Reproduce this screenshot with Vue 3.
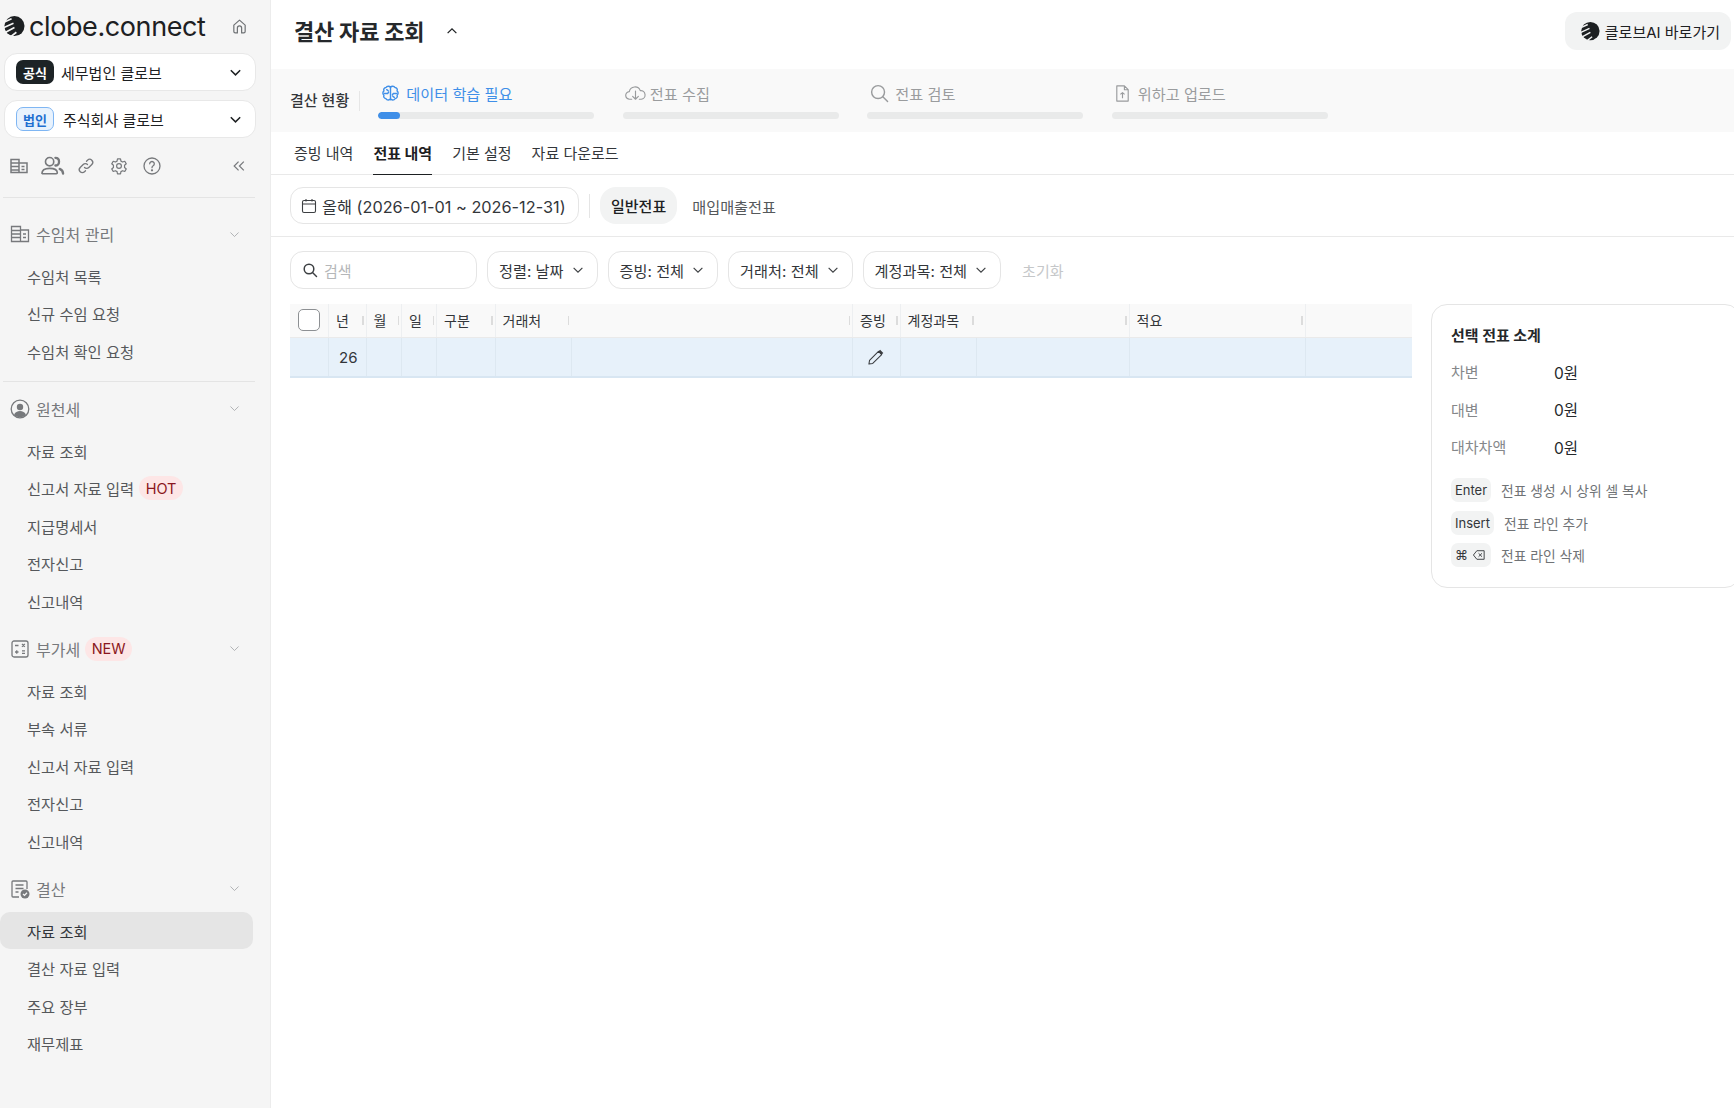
<script setup>
const sections = [
  { title: '수임처 관리', icon: 'building', items: ['수임처 목록', '신규 수임 요청', '수임처 확인 요청'], rule: true },
  { title: '원천세', icon: 'user', items: ['자료 조회', '신고서 자료 입력', '지급명세서', '전자신고', '신고내역'], hot: 1 },
  { title: '부가세', icon: 'calc', badge: 'NEW', items: ['자료 조회', '부속 서류', '신고서 자료 입력', '전자신고', '신고내역'] },
  { title: '결산', icon: 'report', items: ['자료 조회', '결산 자료 입력', '주요 장부', '재무제표'], active: 0 },
]
const steps = [
  { label: '데이터 학습 필요', icon: 'brain', on: true },
  { label: '전표 수집', icon: 'cloud' },
  { label: '전표 검토', icon: 'search' },
  { label: '위하고 업로드', icon: 'file' },
]
const tabs = ['증빙 내역', '전표 내역', '기본 설정', '자료 다운로드']
const filters = ['정렬: 날짜', '증빙: 전체', '거래처: 전체', '계정과목: 전체']
// noLine: the header has no divider at this column's right edge, only the grip
const columns = [
  { w: 39, check: true },
  { w: 37.5, label: '년', value: '26' },
  { w: 35.5, label: '월' },
  { w: 35, label: '일' },
  { w: 58.5, label: '구분' },
  { w: 76.5, label: '거래처', noLine: true },
  { w: 281 },
  { w: 47.5, label: '증빙', pencil: true },
  { w: 76, label: '계정과목', noLine: true },
  { w: 153 },
  { w: 176, label: '적요' },
  { w: 106, last: true },
]
const gridCols = columns.map((c) => c.w + 'px').join(' ')
const totals = [['차변', '0원'], ['대변', '0원'], ['대차차액', '0원']]
</script>

<template>
  <div class="page">
    <aside class="side">
      <div class="brand">
        <svg class="logo" viewBox="0 0 24 24">
          <circle cx="13" cy="11.500" r="10.500" fill="#1d2022" />
          <path d="M-1 9L10 4M-1 14.500L12 8.500M0 20L13 13M6 25L15 18" stroke="#f5f5f5" stroke-width="1.700" />
        </svg>
        <span class="brand-name">clobe.connect</span>
        <svg class="home" viewBox="0 0 24 24" fill="none" stroke="#6f7275" stroke-width="1.700" stroke-linejoin="round">
          <path d="M4 10l8-7 8 7v9a2 2 0 0 1-2 2h-3v-7a3 3 0 0 0-6 0v7H6a2 2 0 0 1-2-2z" />
        </svg>
      </div>

      <button class="org">
        <span class="chip dark">공식</span>
        <span class="org-name">세무법인 클로브</span>
        <svg class="caret" viewBox="0 0 16 16" fill="none" stroke="#1d2022" stroke-width="1.600"><path d="M3 5.500l5 5 5-5" /></svg>
      </button>
      <button class="org">
        <span class="chip blue">법인</span>
        <span class="org-name wide">주식회사 클로브</span>
        <svg class="caret" viewBox="0 0 16 16" fill="none" stroke="#1d2022" stroke-width="1.600"><path d="M3 5.500l5 5 5-5" /></svg>
      </button>

      <div class="tools">
        <svg class="tool" viewBox="0 0 20 20" fill="none" stroke="#77797c" stroke-width="1.500">
          <path d="M2 3.500h8v13H2zM10 7h8v9.500h-8zM2 7h8M2 10.500h8M2 14h8M12.500 10.500h3M12.500 13.500h3" />
        </svg>
        <svg class="tool people" viewBox="0 0 26 22" fill="none" stroke="#77797c" stroke-width="1.700" stroke-linecap="round">
          <circle cx="10" cy="6.500" r="4.300" />
          <path d="M2 19c0-4 3.500-5.500 8-5.500s8 1.500 8 4.500a1 1 0 0 1-1 1H3a1 1 0 0 1-1-1z" />
          <path d="M16 2.500c2.400 0 3.800 1.800 3.800 4s-1.400 4-3.800 4" stroke-width="2.400" />
          <path d="M20.500 14c2 .8 3.500 2 3.500 5" stroke-width="2.400" />
        </svg>
        <svg class="tool" viewBox="0 0 20 20" fill="none" stroke="#77797c" stroke-width="1.300" stroke-linecap="round">
          <path d="M8.500 11.500a3 3 0 0 0 4.300 0l3-3a3 3 0 0 0-4.300-4.300l-1 1" />
          <path d="M11.500 8.500a3 3 0 0 0-4.300 0l-3 3a3 3 0 0 0 4.300 4.300l1-1" />
        </svg>
        <svg class="tool gear" viewBox="0 0 24 24" fill="none" stroke="#77797c" stroke-width="1.600" stroke-linejoin="round">
          <circle cx="12" cy="12" r="3.200" />
          <path d="M10 2.500h4l.6 3 2.200 1.200 2.900-1 2 3.400-2.300 2v2.800l2.300 2-2 3.400-2.900-1-2.200 1.200-.6 3h-4l-.6-3-2.200-1.200-2.900 1-2-3.400 2.300-2v-2.800l-2.300-2 2-3.400 2.900 1L9.400 5.500z" />
        </svg>
        <svg class="tool" viewBox="0 0 20 20" fill="none" stroke="#77797c" stroke-width="1.300" stroke-linecap="round">
          <circle cx="10" cy="10" r="8" />
          <path d="M7.700 7.800a2.300 2.300 0 1 1 3.500 2c-.8.500-1.200 1-1.200 1.900" />
          <circle cx="10" cy="14.300" r=".5" fill="#77797c" />
        </svg>
        <svg class="collapse" viewBox="0 0 16 16" fill="none" stroke="#77797c" stroke-width="1.400"><path d="M7.500 3l-5 5 5 5M13.500 3l-5 5 5 5" /></svg>
      </div>

      <nav class="nav">
        <section v-for="s in sections" :key="s.title" class="group" :class="{ ruled: s.rule }">
          <div class="group-head">
            <svg v-if="s.icon === 'building'" class="group-icon" viewBox="0 0 20 20" fill="none" stroke="#77797c" stroke-width="1.300">
              <path d="M1.500 2.500h9v15h-9zM10.500 6h8v11.500h-8zM1.500 6.500h9M1.500 10h9M1.500 13.500h9M13 10h3M13 13.500h3" />
            </svg>
            <svg v-else-if="s.icon === 'user'" class="group-icon" viewBox="0 0 20 20">
              <circle cx="10" cy="10" r="8.800" fill="none" stroke="#77797c" stroke-width="1.300" />
              <circle cx="10" cy="8" r="3.200" fill="#77797c" />
              <path d="M4 16c1-3 3.500-4 6-4s5 1 6 4c-3 3-9 3-12 0z" fill="#77797c" />
            </svg>
            <svg v-else-if="s.icon === 'calc'" class="group-icon" viewBox="0 0 20 20" fill="none" stroke="#77797c" stroke-width="1.300">
              <rect x="2" y="2" width="16" height="16" rx="2" />
              <path d="M5 6.500h3.500M5 13h3.500M6.750 11.200v3.600M12 5l2.800 2.800M14.800 5L12 7.800M12 11.800h3M12 14.300h3" />
            </svg>
            <svg v-else class="group-icon" viewBox="0 0 20 20" fill="none" stroke="#77797c" stroke-width="1.300">
              <path d="M17 10V3a1 1 0 0 0-1-1H3a1 1 0 0 0-1 1v14a1 1 0 0 0 1 1h6M5.500 6h8M5.500 9.500h8M5.500 13h3" />
              <circle cx="15" cy="15" r="4.500" fill="#77797c" stroke="none" />
              <path d="M13 15l1.500 1.400 2.500-2.600" stroke="#f5f5f5" />
            </svg>
            <span class="group-title">{{ s.title }}</span>
            <span v-if="s.badge" class="badge">{{ s.badge }}</span>
            <svg class="group-caret" viewBox="0 0 16 16" fill="none" stroke="#a9abad" stroke-width="1.100"><path d="M3 5.500l5 5 5-5" /></svg>
          </div>
          <a
            v-for="(item, i) in s.items"
            :key="item"
            class="nav-item"
            :class="{ current: s.active === i }"
          >
            {{ item }}
            <span v-if="s.hot === i" class="badge">HOT</span>
          </a>
        </section>
      </nav>
    </aside>

    <main class="main">
      <header class="top">
        <h1>결산 자료 조회</h1>
        <svg class="title-caret" viewBox="0 0 16 16" fill="none" stroke="#1d2022" stroke-width="1.400"><path d="M3 10.500l5-5 5 5" /></svg>
        <button class="ai">
          <svg viewBox="0 0 24 24" class="ai-logo">
            <circle cx="13" cy="11.500" r="10.500" fill="#1d2022" />
            <path d="M-1 9L10 4M-1 14.500L12 8.500M0 20L13 13M6 25L15 18" stroke="#f2f3f3" stroke-width="1.700" />
          </svg>
          클로브AI 바로가기
        </button>
      </header>

      <div class="status">
        <span class="status-label">결산 현황</span>
        <div class="steps">
          <div v-for="st in steps" :key="st.label" class="step" :class="{ on: st.on }">
            <div class="step-label">
              <svg v-if="st.icon === 'brain'" viewBox="0 0 20 20" fill="none" stroke="#3f8fe8" stroke-width="1.500" stroke-linecap="round" stroke-linejoin="round">
                <path d="M10 3.500c-1-1.600-3.800-1.700-4.700.2-1.900.1-3 2-2.200 3.600-1.500 1.100-1.500 3.400 0 4.500-.8 1.700.3 3.500 2.200 3.700.9 1.900 3.700 1.800 4.700.2 1 1.600 3.800 1.700 4.700-.2 1.900-.2 3-2 2.200-3.700 1.500-1.100 1.500-3.400 0-4.500.8-1.600-.3-3.500-2.200-3.600C13.800 1.800 11 1.900 10 3.500z" />
                <path d="M10 3.500v13M3.500 10H7l1-1.500M16.500 10H13l-1 1.500M6 6l1.500 1M14 14l-1.500-1" />
              </svg>
              <svg v-else-if="st.icon === 'cloud'" class="cloud-icon" viewBox="0 0 22 18" fill="none" stroke="#999b9d" stroke-width="1.200" stroke-linecap="round" stroke-linejoin="round">
                <path d="M7 15H5a4 4 0 0 1-.5-8A6 6 0 0 1 16 6a4.500 4.500 0 0 1 1 9h-2" />
                <path d="M11 6.500V15M8 12l3 3 3-3" />
              </svg>
              <svg v-else-if="st.icon === 'search'" viewBox="0 0 20 20" fill="none" stroke="#999b9d" stroke-width="1.500" stroke-linecap="round">
                <circle cx="8.500" cy="8.500" r="6.800" />
                <path d="M13.500 13.500l5 5" />
              </svg>
              <svg v-else class="file-icon" viewBox="0 0 20 20" fill="none" stroke="#999b9d" stroke-width="1.200" stroke-linejoin="round">
                <path d="M4 2h8l4 4v12H4zM12 2v4h4M10 15v-6M7.800 11L10 9l2.200 2" />
              </svg>
              <span>{{ st.label }}</span>
            </div>
            <div class="track"><div v-if="st.on" class="fill" /></div>
          </div>
        </div>
      </div>

      <div class="tabs">
        <a v-for="t in tabs" :key="t" class="tab" :class="{ current: t === '전표 내역' }">{{ t }}</a>
      </div>

      <div class="range-bar">
        <button class="range">
          <svg viewBox="0 0 16 16" fill="none" stroke="#3c3f42" stroke-width="1.100">
            <rect x="1.500" y="2.500" width="13" height="12" rx="1.500" />
            <path d="M1.500 6h13M5 1v2.500M11 1v2.500" />
          </svg>
          올해 (2026-01-01 ~ 2026-12-31)
        </button>
        <span class="range-rule" />
        <button class="kind current">일반전표</button>
        <button class="kind">매입매출전표</button>
      </div>

      <div class="filters">
        <div class="search">
          <svg viewBox="0 0 16 16" fill="none" stroke="#3c3f42" stroke-width="1.500" stroke-linecap="round">
            <circle cx="7" cy="7" r="4.800" />
            <path d="M10.500 10.500l4 4" />
          </svg>
          <span>검색</span>
        </div>
        <button v-for="f in filters" :key="f" class="filter">
          {{ f }}
          <svg viewBox="0 0 16 16" fill="none" stroke="#3c3f42" stroke-width="1.300"><path d="M3 5.500l5 5 5-5" /></svg>
        </button>
        <span class="reset">초기화</span>
      </div>

      <div class="content">
        <div class="table">
          <div class="row head" :style="{ gridTemplateColumns: gridCols }">
            <div v-for="(c, i) in columns" :key="i" class="cell" :class="{ 'no-line': c.noLine }">
              <span v-if="c.check" class="box" />
              <template v-else>
                <span class="head-label">{{ c.label }}</span>
                <span v-if="!c.last" class="grip" />
              </template>
            </div>
          </div>
          <div class="row body" :style="{ gridTemplateColumns: gridCols }">
            <div v-for="(c, i) in columns" :key="i" class="cell">
              <span v-if="c.value" class="value">{{ c.value }}</span>
              <svg v-if="c.pencil" class="pencil" viewBox="0 0 16 16" fill="none" stroke="#3a3d40" stroke-width="1" stroke-linejoin="round">
                <path d="M1.800 14.200l.6-3.600 8.400-8.400 3 3-8.400 8.400z" />
                <path d="M11.500 1.500l3 3" stroke-width="2.400" />
              </svg>
            </div>
          </div>
        </div>

        <aside class="panel">
          <h2>선택 전표 소계</h2>
          <div v-for="t in totals" :key="t[0]" class="total">
            <span class="total-name">{{ t[0] }}</span>
            <span class="total-value">{{ t[1] }}</span>
          </div>
          <div class="shortcuts">
            <div class="shortcut"><kbd>Enter</kbd><span>전표 생성 시 상위 셀 복사</span></div>
            <div class="shortcut"><kbd>Insert</kbd><span>전표 라인 추가</span></div>
            <div class="shortcut">
              <kbd class="keys">⌘
                <svg viewBox="0 0 16 14" fill="none" stroke="#3c3f42" stroke-width="1.100" stroke-linejoin="round">
                  <path d="M5.500 2H14v10H5.500L1.500 7zM7.500 5l4 4M11.500 5l-4 4" />
                </svg>
              </kbd>
              <span>전표 라인 삭제</span>
            </div>
          </div>
        </aside>
      </div>
    </main>
  </div>
</template>

<style>
html, body { margin: 0; background: #fff; }
</style>

<style scoped>
* { box-sizing: border-box; }
button { font: inherit; color: inherit; }

.page {
  display: flex;
  width: 1734px;
  height: 1108px;
  overflow: hidden;
  font-family: Inter, "Noto Sans CJK KR", sans-serif;
  color: #1d2022;
  background: #fff;
}

.side {
  width: 271px;
  flex: none;
  padding: 0 15px 0 3px;
  background: #f5f5f5;
  border-right: 1px solid #ececec;
}
.brand { display: flex; align-items: center; height: 53px; }
.logo { width: 23px; height: 23px; margin: 0 4px 0 -1px; flex: none; }
.brand-name {
  font-family: Inter, sans-serif;
  font-size: 27px;
  letter-spacing: -0.4px;
  line-height: 1;
  white-space: nowrap;
}
.home { width: 17px; height: 17px; margin-left: auto; margin-right: 7px; }

.org {
  display: flex;
  align-items: center;
  width: 252px;
  height: 38px;
  margin: 0 0 9px 1px;
  padding: 0 12px 0 11px;
  background: #fff;
  border: 1px solid #e8e8e8;
  border-radius: 13px;
}
.chip {
  display: inline-flex;
  align-items: center;
  justify-content: center;
  width: 38px;
  height: 24px;
  border-radius: 7px;
  font-size: 13px;
  font-weight: 700;
}
.chip.dark { background: #1d2326; color: #fff; }
.chip.blue { background: #e8f2fd; color: #1f6fd0; border: 1px solid #7fb6f3; }
.org-name { margin-left: 7px; font-size: 15px; }
.org-name.wide { margin-left: 9px; }
.caret { width: 15px; height: 15px; margin-left: auto; }

.tools { display: flex; align-items: center; gap: 13px; height: 38px; margin-top: 1px; padding-left: 6px; }
.tool { width: 20px; height: 20px; flex: none; }
.tool.people { width: 25px; height: 22px; margin-right: -2px; margin-left: -2px; }
.tool.gear { width: 18px; height: 18px; margin-left: 1px; margin-right: 1px; }
.collapse { width: 14px; height: 14px; margin-left: auto; margin-right: 9px; }

.nav { margin-top: 12px; border-top: 1px solid #e4e4e4; }
.group { padding-top: 17px; padding-bottom: 1px; }
.group.ruled { border-bottom: 1px solid #e4e4e4; padding-bottom: 11px; }
.group + .group { padding-top: 9px; }
.group.ruled + .group { padding-top: 8px; }
.group-head { display: flex; align-items: center; height: 38px; margin-bottom: 4px; padding-left: 7px; }
.group-icon { width: 20px; height: 20px; flex: none; }
.group-title { margin-left: 6px; font-size: 16px; color: #77797c; }
.group-caret { width: 13px; height: 13px; margin-left: auto; margin-right: 14px; }
.badge {
  display: inline-flex;
  align-items: center;
  height: 24px;
  padding: 0 6.5px;
  margin-left: 5px;
  border-radius: 12px;
  background: #fde6e6;
  color: #8a1620;
  font-size: 14.5px;
}
.nav-item {
  display: flex;
  align-items: center;
  width: 253px;
  height: 37.6px;
  margin-left: -3px;
  padding-left: 27px;
  font-size: 15.3px;
  color: #55585b;
  border-radius: 10px;
}
.nav-item.current { background: #e5e5e5; color: #33363a; }

.main { flex: 1; min-width: 0; display: flex; flex-direction: column; }
.top { display: flex; align-items: center; height: 69px; padding: 0 3px 7px 23px; }
.top h1 { margin: 0 0 3px; font-size: 22px; font-weight: 700; letter-spacing: -0.2px; color: #25282b; }
.title-caret { width: 14px; height: 14px; margin-left: 21px; }
.ai {
  display: flex;
  align-items: center;
  gap: 5px;
  margin-left: auto;
  height: 38px;
  padding: 0 11px 0 14px;
  border: 0;
  border-radius: 12px;
  background: #f2f3f3;
  font-size: 15px;
}
.ai-logo { width: 21px; height: 21px; }

.status { display: flex; height: 63px; padding-left: 19px; background: #f9f9f9; }
.status-label {
  align-self: flex-start;
  margin-top: 22px;
  padding-right: 10px;
  border-right: 1px solid #e6e6e6;
  font-size: 15px;
  line-height: 20px;
  font-weight: 500;
  color: #33363a;
}
.steps { display: flex; gap: 28.5px; margin-left: 18px; padding-top: 11px; }
.step { width: 216px; }
.step-label {
  display: flex;
  align-items: center;
  gap: 6px;
  height: 26px;
  padding-left: 3px;
  font-size: 15.2px;
  color: #9a9c9e;
}
.step-label svg { width: 19px; height: 19px; flex: none; }
.step-label svg.cloud-icon { width: 21px; margin-right: -2px; margin-left: -1px; }
.step-label svg.file-icon { margin-left: -2px; }
.step.on .step-label { color: #3f8fe8; }
.track { height: 7px; margin-top: 6px; border-radius: 4px; background: #e9eaea; overflow: hidden; }
.fill { width: 22px; height: 100%; border-radius: 4px; background: #3f8fe8; }

.tabs { display: flex; gap: 20px; height: 43px; padding-left: 23px; border-bottom: 1px solid #e9e9e9; }
.tab {
  display: flex;
  align-items: center;
  height: 43px;
  padding: 0 0 2px;
  font-size: 15px;
  color: #33363a;
}
.tab.current { font-weight: 700; color: #1d2022; box-shadow: inset 0 -1px 0 #1d2022; padding: 0 0 3px; }

.range-bar { display: flex; align-items: center; height: 62px; padding-left: 19px; border-bottom: 1px solid #e9e9e9; }
.range {
  display: flex;
  align-items: center;
  gap: 5px;
  height: 37px;
  width: 289px;
  padding: 0 0 0 10px;
  background: #fff;
  border: 1px solid #e5e5e5;
  border-radius: 13px;
  font-size: 16.3px;
  white-space: nowrap;
  color: #33363a;
}
.range svg { width: 16px; height: 16px; flex: none; }
.range-rule { width: 1px; height: 24px; margin: 0 10px; background: #e5e5e5; }
.kind { height: 37px; padding: 0 11px; border: 0; background: none; border-radius: 16px; font-size: 15px; color: #55585b; }
.kind + .kind { margin-left: 4px; font-size: 15.2px; }
.kind.current { background: #f2f3f3; font-weight: 500; color: #1d2022; }

.filters { display: flex; align-items: center; gap: 10px; padding: 14px 0 15px 19px; }
.search {
  display: flex;
  align-items: center;
  gap: 6px;
  width: 187px;
  height: 38px;
  padding-left: 11px;
  border: 1px solid #e5e5e5;
  border-radius: 13px;
  font-size: 15px;
  color: #b5b7b9;
}
.search svg { width: 16px; height: 16px; }
.filter {
  display: flex;
  align-items: center;
  gap: 7px;
  height: 38px;
  padding: 0 12px 0 11px;
  background: #fff;
  border: 1px solid #e5e5e5;
  border-radius: 13px;
  font-size: 15.2px;
  white-space: nowrap;
  color: #33363a;
}
.filter svg { width: 14px; height: 14px; }
.reset { margin-left: 11px; font-size: 15px; color: #c5c7c9; }

.content { display: flex; align-items: flex-start; padding-left: 19px; }
.table { width: 1122px; flex: none; }
.row { display: grid; }
.row.head { height: 34px; background: #f9f9f9; border-bottom: 1px solid #eaeaea; }
.row.body { height: 40px; background: #e7f1fa; border-bottom: 2px solid #d8e6f2; }
.cell { position: relative; display: flex; align-items: center; border-right: 1px solid #edeff1; }
.row.body .cell { border-right-color: #dde8f1; }
.cell:last-child { border-right: 0; }
.head .cell { padding: 0 0 2px 7px; font-size: 14px; color: #33363a; }
.head .cell.no-line { border-right: 0; }
.head-label { white-space: nowrap; }
.grip { position: absolute; right: 2px; top: 12px; width: 1.5px; height: 9px; background: #dcdcdc; }
.no-line .grip { right: 3px; }
.box { width: 22px; height: 22px; margin-left: 1px; background: #fff; border: 1px solid #8d9093; border-radius: 5px; }
.value { padding-left: 10px; font-size: 15px; color: #33363a; }
.pencil { width: 17px; height: 17px; margin-left: 14px; }

.panel {
  width: 310px;
  height: 284px;
  flex: none;
  margin-left: 19px;
  padding: 21px 0 0 19px;
  background: #fff;
  border: 1px solid #e5e5e5;
  border-radius: 16px;
}
.panel h2 { margin: 0 0 7px; font-size: 15px; line-height: 20px; font-weight: 700; color: #25282b; }
.total { display: flex; align-items: center; height: 37.5px; font-size: 15px; }
.total-name { width: 103px; color: #85878a; }
.total-value { color: #25282b; font-size: 15.5px; }
.shortcuts { margin-top: 8px; }
.shortcut { display: flex; align-items: center; gap: 10px; height: 32.7px; font-size: 13.8px; color: #707376; }
kbd {
  display: inline-flex;
  align-items: center;
  height: 24px;
  padding: 0 4px;
  border-radius: 7px;
  background: #f2f3f3;
  font-family: inherit;
  font-size: 13px;
  color: #33363a;
}
kbd.keys { gap: 4px; padding: 0 5px 0 4px; }
kbd.keys svg { width: 14px; height: 12px; }
</style>
